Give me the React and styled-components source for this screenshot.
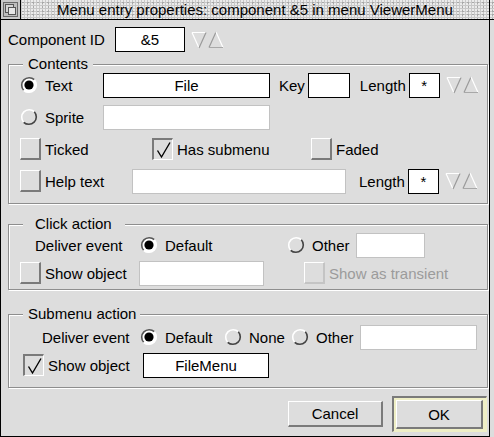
import styled, { createGlobalStyle } from "styled-components";

const Global = createGlobalStyle`
  html, body { margin: 0; padding: 0; background: #dddddd; }
  body {
    font-family: "Liberation Sans", Arial, sans-serif;
    font-size: 15px;
    color: #000;
  }
`;

const Screen = styled.div`
  width: 494px;
  height: 437px;
  overflow: hidden;
  display: flex;
  flex-direction: column;
`;

const TitleBar = styled.div`
  display: flex;
  height: 19px;
  border-bottom: 1px solid #000;
  border-left: 1px solid #000;
  background-color: #c8c8c8;
  background-image:
    radial-gradient(circle at 1px 1px, #ebebeb 0.9px, transparent 1.2px),
    radial-gradient(circle at 2px 3px, #a8a8a8 0.8px, transparent 1.1px);
  background-size: 3px 3px, 5px 4px;
`;

const BackIcon = styled.div`
  width: 19px;
  height: 19px;
  border-right: 1px solid #000;
  background: #c8c8c8;
  display: flex;
  align-items: center;
  justify-content: center;
`;

const Title = styled.div`
  flex: 1;
  text-align: center;
  line-height: 19px;
  border-right: 1px solid #000;
  white-space: nowrap;
`;

const TitleTail = styled.div`
  width: 4px;
`;

const Window = styled.div`
  width: 488px;
  height: 416px;
  border: 1px solid #000;
  border-top: none;
  background: #dddddd;
  display: flex;
  flex-direction: column;
  padding-top: 7px;
  box-sizing: content-box;
`;

const Row = styled.div`
  display: flex;
  align-items: center;
  height: ${({ $h }) => $h || 28}px;
  padding-left: ${({ $pl }) => $pl || 0}px;
  flex: none;
`;

const Frame = styled.div`
  position: relative;
  margin: ${({ $mt }) => $mt}px 1px 0 7px;
  border: 1px solid #8e8e8e;
  box-shadow: inset 1px 1px 0 #fff, 1px 1px 0 #fff;
  padding: ${({ $pt }) => $pt}px 0 ${({ $pb }) => $pb}px 11px;
  flex: none;
`;

const Legend = styled.span`
  position: absolute;
  top: -10px;
  left: 14px;
  padding: 0 ${({ $pr }) => $pr}px 0 ${({ $pl }) => $pl}px;
  background: #dddddd;
  line-height: 17px;
`;

const Option = styled.div`
  display: flex;
  align-items: center;
  gap: ${({ $gap }) => ($gap === undefined ? 7 : $gap)}px;
  width: ${({ $w }) => ($w ? `${$w}px` : "auto")};
  margin-left: ${({ $ml }) => $ml || 0}px;
  flex: none;
  white-space: nowrap;
`;

const Label = styled.span`
  margin-left: ${({ $ml }) => $ml || 0}px;
  color: ${({ $dim }) => ($dim ? "#9b9b9b" : "#000")};
  white-space: nowrap;
`;

const Field = styled.div`
  box-sizing: border-box;
  width: ${({ $w }) => $w}px;
  height: 25px;
  margin-left: ${({ $ml }) => $ml || 0}px;
  border: 1px solid ${({ $plain }) => ($plain ? "#c2c2c2" : "#000")};
  background: #fff;
  display: flex;
  align-items: center;
  justify-content: center;
  flex: none;
`;

const Box = styled.span`
  box-sizing: border-box;
  width: 21px;
  height: 22px;
  flex: none;
  display: flex;
  align-items: center;
  justify-content: center;
  border-style: solid;
  border-width: ${({ $on }) => ($on ? "2px 1px 1px 2px" : "1px 2px 2px 1px")};
  border-color: ${({ $on, $off }) =>
    $on
      ? "#7a7a7a #fff #fff #7a7a7a"
      : $off
      ? "#fff #c4c4c4 #c4c4c4 #fff"
      : "#fff #7a7a7a #7a7a7a #fff"};
  background: #dddddd;
`;

const ButtonRow = styled.div`
  display: flex;
  justify-content: flex-end;
  align-items: center;
  gap: 9px;
  margin-top: 8px;
  padding-right: 2px;
`;

const Button = styled.div`
  box-sizing: border-box;
  width: ${({ $w }) => $w}px;
  height: ${({ $h }) => $h}px;
  display: flex;
  align-items: center;
  justify-content: center;
  border-style: solid;
  border-width: 1px 2px 2px 1px;
  border-color: #fff #7a7a7a #7a7a7a #fff;
  background: #dddddd;
`;

const DefaultWell = styled.div`
  box-sizing: border-box;
  width: 95px;
  height: 36px;
  padding: 2px;
  border-style: solid;
  border-width: 2px 1px 1px 2px;
  border-color: #7a7a7a #efefc6 #efefc6 #7a7a7a;
  background: #efefc6;
  display: flex;
`;

function Radio({ on }) {
  return (
    <svg width="18" height="18" viewBox="0 0 18 18">
      <circle cx="9" cy="9" r="7.5" fill={on ? "#fff" : "#dddddd"} />
      <path d="M3.7 14.3 A7.5 7.5 0 0 1 14.3 3.7" fill="none" stroke={on ? "#555" : "#fff"} strokeWidth="1.6" />
      <path d="M14.3 3.7 A7.5 7.5 0 0 1 3.7 14.3" fill="none" stroke={on ? "#fff" : "#444"} strokeWidth="1.6" />
      {on && <circle cx="9" cy="9" r="4.6" fill="#000" />}
    </svg>
  );
}

function Check({ on, off }) {
  return (
    <Box $on={on} $off={off}>
      {on && (
        <svg width="17" height="18" viewBox="0 0 17 18">
          <path d="M2.5 9.5 L6.5 16 L15 1.5" fill="none" stroke="#000" strokeWidth="1.4" />
        </svg>
      )}
    </Box>
  );
}

function Adjuster({ ml }) {
  return (
    <svg width="34" height="18" viewBox="0 0 34 18" style={{ marginLeft: ml, flex: "none" }}>
      <path d="M1 1.5 L15 1.5" stroke="#fff" strokeWidth="1" />
      <path d="M1 1.5 L8 17" stroke="#fff" strokeWidth="1.2" />
      <path d="M15 1.5 L8 17" stroke="#9a9a9a" strokeWidth="1.2" />
      <path d="M18 16.5 L25 1" stroke="#9a9a9a" strokeWidth="1.2" />
      <path d="M25 1 L32 16.5" stroke="#fff" strokeWidth="1.2" />
      <path d="M18 16.5 L32 16.5" stroke="#a8a8a8" strokeWidth="1" />
    </svg>
  );
}

function BackGlyph() {
  return (
    <svg width="17" height="17" viewBox="0 0 17 17">
      <rect x="1.5" y="1.5" width="14" height="14" fill="#bdbdbd" stroke="#6a6a6a" />
      <rect x="3.5" y="3.5" width="8" height="8" fill="#d4d4d4" stroke="#555" />
      <rect x="6.5" y="6.5" width="7" height="7" fill="#e6e6e6" stroke="#555" />
    </svg>
  );
}

export default function App() {
  return (
    <>
      <Global />
      <Screen>
        <TitleBar>
          <BackIcon>
            <BackGlyph />
          </BackIcon>
          <Title>Menu entry properties: component &amp;5 in menu ViewerMenu</Title>
          <TitleTail />
        </TitleBar>
        <Window>
          <Row $h={25} $pl={7}>
            <Option $w={107}>Component ID</Option>
            <Field $w={70}>&amp;5</Field>
            <Adjuster ml={6} />
          </Row>

          <Frame $mt={12} $pt={4} $pb={6}>
            <Legend $pl={5} $pr={5}>Contents</Legend>
            <Row $h={32}>
              <Option $w={83}>
                <Radio on />
                <Label>Text</Label>
              </Option>
              <Field $w={167}>File</Field>
              <Label $ml={9}>Key</Label>
              <Field $w={42} $ml={3} />
              <Label $ml={10}>Length</Label>
              <Field $w={31} $ml={3}>*</Field>
              <Adjuster ml={6} />
            </Row>
            <Row $h={32}>
              <Option $w={83}>
                <Radio />
                <Label>Sprite</Label>
              </Option>
              <Field $w={167} $plain />
            </Row>
            <Row $h={32}>
              <Option $w={132} $gap={4}>
                <Check />
                <Label>Ticked</Label>
              </Option>
              <Option $w={159} $gap={4}>
                <Check on />
                <Label>Has submenu</Label>
              </Option>
              <Option $gap={4}>
                <Check />
                <Label>Faded</Label>
              </Option>
            </Row>
            <Row $h={32}>
              <Option $w={112} $gap={4}>
                <Check />
                <Label>Help text</Label>
              </Option>
              <Field $w={214} $plain />
              <Label $ml={13}>Length</Label>
              <Field $w={31} $ml={3}>*</Field>
              <Adjuster ml={6} />
            </Row>
          </Frame>

          <Frame $mt={20} $pt={6} $pb={2}>
            <Legend $pl={12} $pr={13}>Click action</Legend>
            <Row $pl={15}>
              <Option $w={105}>Deliver event</Option>
              <Option $w={147}>
                <Radio on />
                <Label>Default</Label>
              </Option>
              <Option $w={69}>
                <Radio />
                <Label>Other</Label>
              </Option>
              <Field $w={69} $plain />
            </Row>
            <Row>
              <Option $w={119} $gap={4}>
                <Check />
                <Label>Show object</Label>
              </Option>
              <Field $w={125} $plain />
              <Option $ml={40} $gap={4}>
                <Check off />
                <Label $dim>Show as transient</Label>
              </Option>
            </Row>
          </Frame>

          <Frame $mt={24} $pt={8} $pb={8}>
            <Legend $pl={5} $pr={4}>Submenu action</Legend>
            <Row $pl={22}>
              <Option $w={98}>Deliver event</Option>
              <Option $w={84}>
                <Radio on />
                <Label>Default</Label>
              </Option>
              <Option $w={67}>
                <Radio />
                <Label>None</Label>
              </Option>
              <Option $w={69}>
                <Radio />
                <Label>Other</Label>
              </Option>
              <Field $w={117} $plain />
            </Row>
            <Row $pl={3}>
              <Option $w={120} $gap={4}>
                <Check on />
                <Label>Show object</Label>
              </Option>
              <Field $w={126}>FileMenu</Field>
            </Row>
          </Frame>

          <ButtonRow>
            <Button $w={95} $h={26}>Cancel</Button>
            <DefaultWell>
              <Button $w={87} $h={29}>OK</Button>
            </DefaultWell>
          </ButtonRow>
        </Window>
      </Screen>
    </>
  );
}
